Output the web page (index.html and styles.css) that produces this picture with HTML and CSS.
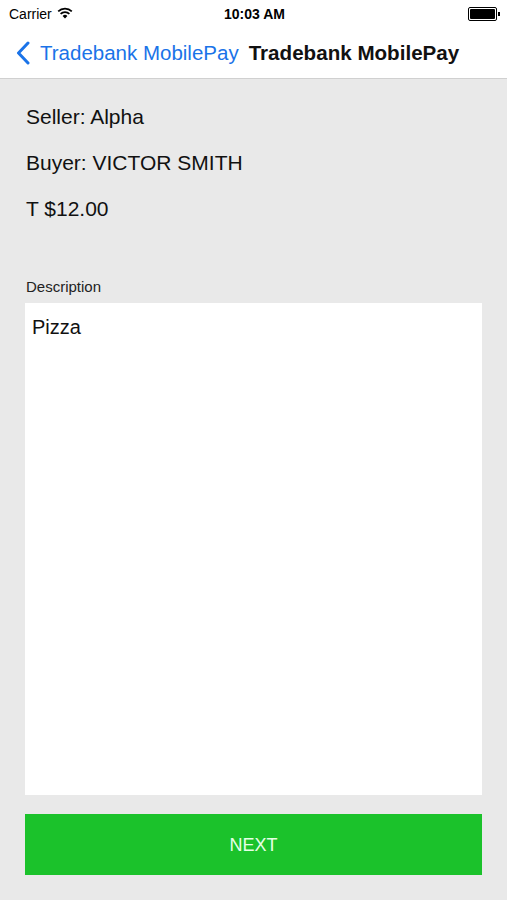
FILE: index.html
```html
<!DOCTYPE html>
<html>
<head>
<meta charset="utf-8">
<link rel="stylesheet" href="styles.css">
</head>
<body>
<div class="app">
  <div class="top">
    <div class="status">
      <div class="status-left">Carrier
        <svg class="wifi" width="16" height="12" viewBox="0 0 16 12">
          <path d="M8 11.5 L5.6 8.9 A3.4 3.4 0 0 1 10.4 8.9 Z" fill="#000"/>
          <path d="M3.6 6.9 A6.2 6.2 0 0 1 12.4 6.9" fill="none" stroke="#000" stroke-width="1.7"/>
          <path d="M1.2 4.4 A9.6 9.6 0 0 1 14.8 4.4" fill="none" stroke="#000" stroke-width="1.7"/>
        </svg>
      </div>
      <div class="status-time">10:03 AM</div>
      <div class="status-right">
        <div class="battery"><div class="battery-fill"></div></div><div class="battery-tip"></div>
      </div>
    </div>
    <div class="nav">
      <div class="back">
        <svg class="chevron" width="14" height="24" viewBox="0 0 14 24">
          <path d="M12 2 L2.5 12 L12 22" fill="none" stroke="#1a73e8" stroke-width="3" stroke-linecap="round" stroke-linejoin="round"/>
        </svg>
        <span class="back-text">Tradebank MobilePay</span>
      </div>
      <div class="title">Tradebank MobilePay</div>
    </div>
  </div>
  <div class="content">
    <div class="info">Seller: Alpha</div>
    <div class="info">Buyer: VICTOR SMITH</div>
    <div class="info">T $12.00</div>
    <div class="label">Description</div>
    <div class="desc">Pizza</div>
    <button class="next">NEXT</button>
  </div>
</div>
</body>
</html>
```
FILE: styles.css
```css
html, body {
  margin: 0;
  padding: 0;
}
body {
  font-family: "Liberation Sans", Arial, sans-serif;
  background: #e9e9e9;
  width: 507px;
  height: 900px;
  overflow: hidden;
}
.app {
  display: flex;
  flex-direction: column;
  height: 900px;
}
.top {
  background: #fff;
  border-bottom: 1px solid #d0d0d0;
}
.status {
  height: 28px;
  display: flex;
  align-items: center;
  justify-content: space-between;
  padding: 0 7px 0 9px;
  font-size: 14px;
  color: #000;
}
.status-left {
  display: flex;
  align-items: center;
  gap: 5px;
  width: 120px;
}
.wifi {
  margin-top: -3px;
}
.status-time {
  font-weight: bold;
  font-size: 14px;
}
.status-right {
  width: 120px;
  display: flex;
  justify-content: flex-end;
  align-items: center;
}
.battery {
  width: 25px;
  height: 10px;
  border: 1px solid #000;
  border-radius: 2px;
  padding: 1px;
  box-sizing: content-box;
}
.battery-fill {
  width: 100%;
  height: 100%;
  background: #000;
  border-radius: 1px;
}
.battery-tip {
  width: 2px;
  height: 4px;
  background: #000;
  margin-left: 1px;
}
.nav {
  height: 50px;
  display: flex;
  align-items: center;
  padding-left: 16px;
}
.back {
  display: flex;
  align-items: center;
  color: #1a73e8;
  font-size: 20.5px;
}
.chevron {
  margin-right: 10px;
}
.title {
  font-size: 20.6px;
  font-weight: bold;
  margin-left: 10px;
  color: #111;
}
.content {
  flex: 1;
  display: flex;
  flex-direction: column;
  padding: 0 25px 25px 25px;
}
.info {
  font-size: 21px;
  color: #111;
  line-height: 46px;
  padding-left: 1px;
}
.info:first-child {
  margin-top: 15px;
}
.label {
  margin-top: 46px;
  font-size: 15px;
  color: #222;
  line-height: 18px;
  padding-left: 1px;
}
.desc {
  margin-top: 7px;
  background: #fff;
  height: 492px;
  box-sizing: border-box;
  padding: 13px 7px;
  font-size: 20px;
  color: #111;
}
.next {
  margin-top: 19px;
  height: 61px;
  padding-top: 3px;
  background: #1bc22b;
  border: none;
  color: #e6ffe6;
  font-size: 18px;
  font-family: "Liberation Sans", Arial, sans-serif;
}
```
